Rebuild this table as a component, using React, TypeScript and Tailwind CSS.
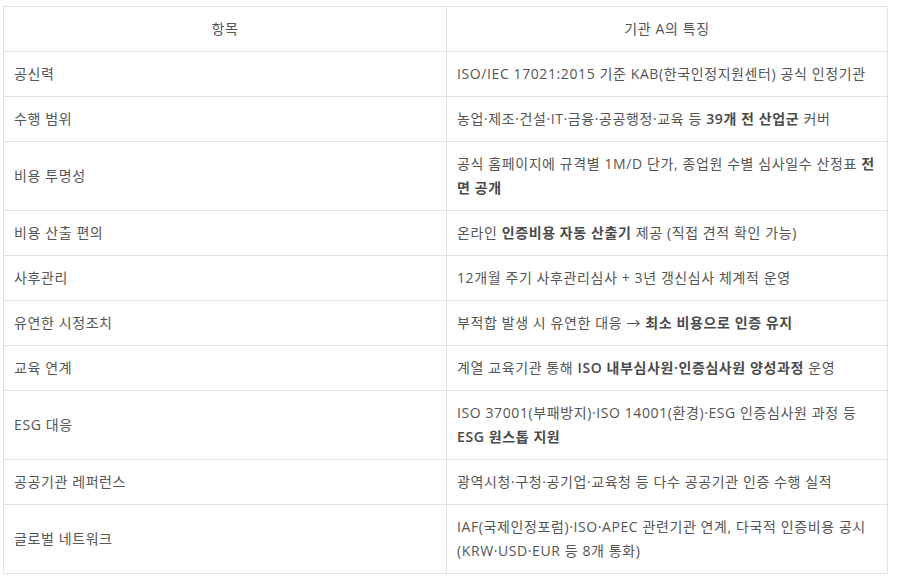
import type { ReactNode } from "react"

interface Row {
  label: string
  detail: ReactNode
}

const B = ({ children }: { children: ReactNode }) => (
  <strong className="font-semibold text-[#4a4a4a]">{children}</strong>
)

const rows: Row[] = [
  { label: "공신력", detail: "ISO/IEC 17021:2015 기준 KAB(한국인정지원센터) 공식 인정기관" },
  {
    label: "수행 범위",
    detail: (
      <>
        농업·제조·건설·IT·금융·공공행정·교육 등 <B>39개 전 산업군</B> 커버
      </>
    ),
  },
  {
    label: "비용 투명성",
    detail: (
      <>
        공식 홈페이지에 규격별 1M/D 단가, 종업원 수별 심사일수 산정표 <B>전면 공개</B>
      </>
    ),
  },
  {
    label: "비용 산출 편의",
    detail: (
      <>
        온라인 <B>인증비용 자동 산출기</B> 제공 (직접 견적 확인 가능)
      </>
    ),
  },
  { label: "사후관리", detail: "12개월 주기 사후관리심사 + 3년 갱신심사 체계적 운영" },
  {
    label: "유연한 시정조치",
    detail: (
      <>
        부적합 발생 시 유연한 대응 → <B>최소 비용으로 인증 유지</B>
      </>
    ),
  },
  {
    label: "교육 연계",
    detail: (
      <>
        계열 교육기관 통해 <B>ISO 내부심사원·인증심사원 양성과정</B> 운영
      </>
    ),
  },
  {
    label: "ESG 대응",
    detail: (
      <>
        ISO 37001(부패방지)·ISO 14001(환경)·ESG 인증심사원 과정 등 <B>ESG 원스톱 지원</B>
      </>
    ),
  },
  { label: "공공기관 레퍼런스", detail: "광역시청·구청·공기업·교육청 등 다수 공공기관 인증 수행 실적" },
  {
    label: "글로벌 네트워크",
    detail: "IAF(국제인정포럼)·ISO·APEC 관련기관 연계, 다국적 인증비용 공시 (KRW·USD·EUR 등 8개 통화)",
  },
]

export default function App() {
  return (
    <div className="bg-white pl-[3px] pt-[6px] font-['Open_Sans','Noto_Sans_CJK_KR',sans-serif] text-[14px] leading-[24px] tracking-[0.6px] text-[#555]">
      <table className="w-[885px] table-fixed border-collapse border border-[#e1e1e1]">
        <thead>
          <tr>
            <th className="w-[443px] border border-[#e1e1e1] p-[10px] text-center font-normal">항목</th>
            <th className="border border-[#e1e1e1] p-[10px] text-center font-normal">기관 A의 특징</th>
          </tr>
        </thead>
        <tbody>
          {rows.map((row) => (
            <tr key={row.label}>
              <td className="border border-[#e1e1e1] p-[10px] align-middle">{row.label}</td>
              <td className="border border-[#e1e1e1] p-[10px] align-middle">{row.detail}</td>
            </tr>
          ))}
        </tbody>
      </table>
    </div>
  )
}
